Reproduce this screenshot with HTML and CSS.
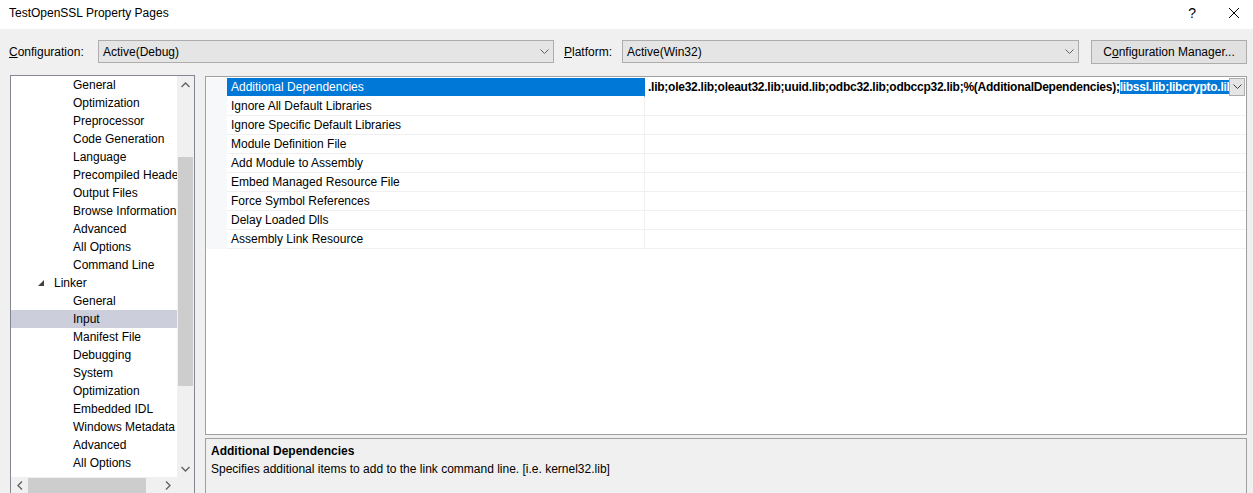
FILE: index.html
```html
<!DOCTYPE html>
<html lang="en">
<head>
    <meta charset="UTF-8">
    <title>TestOpenSSL Property Pages</title>
    <link rel="stylesheet" href="styles.css">
</head>
<body>
    <div class="window">
        <div class="titlebar">
            <span class="title">TestOpenSSL Property Pages</span>
            <div class="title-buttons">
                <span class="help-button">?</span>
                <svg class="close-button" width="12" height="12" viewBox="0 0 12 12"><path d="M1 1 L11 11 M11 1 L1 11" stroke="#000" stroke-width="1" fill="none"/></svg>
            </div>
        </div>

        <div class="config-bar">
            <label class="field-label config-label"><u>C</u>onfiguration:</label>
            <div class="combo config-combo">
                <span>Active(Debug)</span>
                <svg class="chevron" width="9" height="6" viewBox="0 0 9 6"><path d="M0.5 0.5 L4.5 4.5 L8.5 0.5" stroke="#606060" fill="none"/></svg>
            </div>
            <label class="field-label platform-label"><u>P</u>latform:</label>
            <div class="combo platform-combo">
                <span>Active(Win32)</span>
                <svg class="chevron" width="9" height="6" viewBox="0 0 9 6"><path d="M0.5 0.5 L4.5 4.5 L8.5 0.5" stroke="#606060" fill="none"/></svg>
            </div>
            <button class="config-manager">C<u>o</u>nfiguration Manager...</button>
        </div>

        <div class="main">
            <div class="tree-panel">
                <div class="tree-body">
                    <ul class="tree-list">
                        <li class="tree-item">General</li>
                        <li class="tree-item">Optimization</li>
                        <li class="tree-item">Preprocessor</li>
                        <li class="tree-item">Code Generation</li>
                        <li class="tree-item">Language</li>
                        <li class="tree-item">Precompiled Headers</li>
                        <li class="tree-item">Output Files</li>
                        <li class="tree-item">Browse Information</li>
                        <li class="tree-item">Advanced</li>
                        <li class="tree-item">All Options</li>
                        <li class="tree-item">Command Line</li>
                        <li class="tree-item tree-group">
                            <svg class="expander" width="7" height="7" viewBox="0 0 7 7"><polygon points="6,0 6,6 0,6" fill="#404040"/></svg>
                            Linker
                        </li>
                        <li class="tree-item">General</li>
                        <li class="tree-item selected">Input</li>
                        <li class="tree-item">Manifest File</li>
                        <li class="tree-item">Debugging</li>
                        <li class="tree-item">System</li>
                        <li class="tree-item">Optimization</li>
                        <li class="tree-item">Embedded IDL</li>
                        <li class="tree-item">Windows Metadata</li>
                        <li class="tree-item">Advanced</li>
                        <li class="tree-item">All Options</li>
                    </ul>
                    <div class="vscroll">
                        <div class="scroll-arrow">
                            <svg width="9" height="6" viewBox="0 0 9 6"><path d="M0.5 5 L4.5 1 L8.5 5" stroke="#606060" stroke-width="1.3" fill="none"/></svg>
                        </div>
                        <div class="vscroll-track">
                            <div class="vscroll-thumb"></div>
                        </div>
                        <div class="scroll-arrow">
                            <svg width="9" height="6" viewBox="0 0 9 6"><path d="M0.5 1 L4.5 5 L8.5 1" stroke="#606060" stroke-width="1.3" fill="none"/></svg>
                        </div>
                    </div>
                </div>
                <div class="hscroll">
                    <div class="scroll-arrow">
                        <svg width="6" height="9" viewBox="0 0 6 9"><path d="M5 0.5 L1 4.5 L5 8.5" stroke="#606060" stroke-width="1.3" fill="none"/></svg>
                    </div>
                    <div class="hscroll-track">
                        <div class="hscroll-thumb"></div>
                    </div>
                    <div class="scroll-arrow">
                        <svg width="6" height="9" viewBox="0 0 6 9"><path d="M1 0.5 L5 4.5 L1 8.5" stroke="#606060" stroke-width="1.3" fill="none"/></svg>
                    </div>
                    <div class="scroll-corner"></div>
                </div>
            </div>

            <div class="right-col">
                <div class="grid-panel">
                    <div class="prop-row active">
                        <div class="row-margin"></div>
                        <div class="prop-name">Additional Dependencies</div>
                        <div class="prop-value">
                            <div class="value-edit">
                                <span class="value-text">.lib;ole32.lib;oleaut32.lib;uuid.lib;odbc32.lib;odbccp32.lib;%(AdditionalDependencies);<span class="value-selected">libssl.lib;libcrypto.lib</span></span>
                            </div>
                            <div class="value-drop">
                                <svg width="9" height="6" viewBox="0 0 9 6"><path d="M0.5 0.5 L4.5 4.5 L8.5 0.5" stroke="#404040" fill="none"/></svg>
                            </div>
                        </div>
                    </div>
                    <div class="prop-row">
                        <div class="row-margin"></div>
                        <div class="prop-name">Ignore All Default Libraries</div>
                        <div class="prop-value"></div>
                    </div>
                    <div class="prop-row">
                        <div class="row-margin"></div>
                        <div class="prop-name">Ignore Specific Default Libraries</div>
                        <div class="prop-value"></div>
                    </div>
                    <div class="prop-row">
                        <div class="row-margin"></div>
                        <div class="prop-name">Module Definition File</div>
                        <div class="prop-value"></div>
                    </div>
                    <div class="prop-row">
                        <div class="row-margin"></div>
                        <div class="prop-name">Add Module to Assembly</div>
                        <div class="prop-value"></div>
                    </div>
                    <div class="prop-row">
                        <div class="row-margin"></div>
                        <div class="prop-name">Embed Managed Resource File</div>
                        <div class="prop-value"></div>
                    </div>
                    <div class="prop-row">
                        <div class="row-margin"></div>
                        <div class="prop-name">Force Symbol References</div>
                        <div class="prop-value"></div>
                    </div>
                    <div class="prop-row">
                        <div class="row-margin"></div>
                        <div class="prop-name">Delay Loaded Dlls</div>
                        <div class="prop-value"></div>
                    </div>
                    <div class="prop-row">
                        <div class="row-margin"></div>
                        <div class="prop-name">Assembly Link Resource</div>
                        <div class="prop-value"></div>
                    </div>
                </div>
                <div class="desc-panel">
                    <div class="desc-title">Additional Dependencies</div>
                    <div class="desc-text">Specifies additional items to add to the link command line. [i.e. kernel32.lib]</div>
                </div>
            </div>
        </div>
    </div>
</body>
</html>
```

FILE: styles.css
```css
body {
    margin: 0;
    font-family: "Liberation Sans", Arial, sans-serif;
    font-size: 12px;
    color: #000;
    background: #f0f0f0;
    overflow: hidden;
}
.window {
    width: 1253px;
    height: 493px;
    overflow: hidden;
    display: flex;
    flex-direction: column;
}
.titlebar {
    height: 29px;
    background: #fff;
    display: flex;
    align-items: center;
    justify-content: space-between;
    padding: 0 0 3px 9px;
    box-sizing: border-box;
    flex-shrink: 0;
}
.title-buttons {
    display: flex;
    align-items: center;
    gap: 32px;
    padding-right: 13px;
}
.help-button {
    font-size: 14px;
}
.config-bar {
    display: flex;
    align-items: center;
    height: 23px;
    margin: 11px 0 12px 0;
    padding-left: 9px;
    flex-shrink: 0;
}
.field-label {
    white-space: nowrap;
}
.config-label {
    width: 89px;
}
.platform-label {
    width: 58px;
    margin-left: 10px;
}
.combo {
    height: 23px;
    box-sizing: border-box;
    background: #e5e5e5;
    border: 1px solid #adadad;
    display: flex;
    align-items: center;
    justify-content: space-between;
    padding: 0 4px 0 4px;
}
.config-combo {
    width: 456px;
}
.platform-combo {
    width: 457px;
}
.config-manager {
    margin-left: 12px;
    width: 156px;
    height: 24px;
    background: #e1e1e1;
    border: 1px solid #adadad;
    font-family: inherit;
    font-size: 12px;
    color: #000;
    padding: 0;
}
.main {
    display: flex;
    gap: 10px;
    padding-left: 10px;
    flex: 1;
}
.tree-panel {
    width: 185px;
    height: 421px;
    box-sizing: border-box;
    border: 1px solid #828790;
    background: #fff;
    display: flex;
    flex-direction: column;
}
.tree-body {
    display: flex;
    height: 401px;
}
.tree-list {
    list-style: none;
    margin: 0;
    padding: 0;
    flex: 1;
    overflow: hidden;
}
.tree-item {
    height: 18px;
    line-height: 18px;
    padding-left: 62px;
    white-space: nowrap;
    overflow: hidden;
}
.tree-group {
    padding-left: 27px;
    display: flex;
    align-items: center;
}
.expander {
    margin-right: 9px;
}
.tree-item.selected {
    background: #cccedb;
}
.vscroll {
    width: 17px;
    background: #f0f0f0;
    display: flex;
    flex-direction: column;
}
.scroll-arrow {
    width: 17px;
    height: 17px;
    display: flex;
    align-items: center;
    justify-content: center;
    flex-shrink: 0;
}
.vscroll-track {
    flex: 1;
    padding-top: 64px;
}
.vscroll-thumb {
    width: 15px;
    height: 229px;
    margin-left: 1px;
    background: #cdcdcd;
}
.hscroll {
    height: 18px;
    display: flex;
    background: #f0f0f0;
}
.hscroll-track {
    width: 131px;
}
.hscroll-thumb {
    width: 118px;
    height: 17px;
    margin-top: 1px;
    background: #cdcdcd;
}
.scroll-corner {
    width: 17px;
    background: #f0f0f0;
}
.right-col {
    display: flex;
    flex-direction: column;
    width: 1042px;
}
.grid-panel {
    height: 359px;
    box-sizing: border-box;
    border: 1px solid #a0a0a0;
    background: #fff;
    padding-top: 1px;
    margin-top: 1px;
}
.prop-row {
    display: grid;
    grid-template-columns: 21px 418px 1fr;
    height: 19px;
}
.row-margin {
    background: #f7f8fa;
}
.prop-name {
    padding-left: 4px;
    line-height: 18px;
    white-space: nowrap;
    border-right: 1px solid #f0f0f0;
    border-bottom: 1px solid #f0f0f0;
}
.prop-row.active .prop-name {
    background: #0078d7;
    color: #fff;
    border-right-color: #0078d7;
    border-bottom-color: #fff;
}
.prop-value {
    display: flex;
    min-width: 0;
    border-bottom: 1px solid #f0f0f0;
}
.prop-row.active .prop-value {
    border-bottom-color: #fff;
}
.value-edit {
    flex: 1;
    min-width: 0;
    overflow: hidden;
    padding-left: 3px;
    line-height: 18px;
    white-space: nowrap;
    font-weight: bold;
    letter-spacing: -0.25px;
}
.value-selected {
    background: #0078d7;
    color: #fff;
}
.value-drop {
    width: 16px;
    height: 18px;
    box-sizing: border-box;
    background: #e5e5e5;
    border: 1px solid #adadad;
    display: flex;
    align-items: center;
    justify-content: center;
    margin-right: 1px;
}
.desc-panel {
    margin-top: 3px;
    flex: 1;
    border: 1px solid #a0a0a0;
    background: #f0f0f0;
    padding: 3px 5px;
}
.desc-title {
    font-weight: bold;
    line-height: 18px;
}
.desc-text {
    line-height: 18px;
}
```
